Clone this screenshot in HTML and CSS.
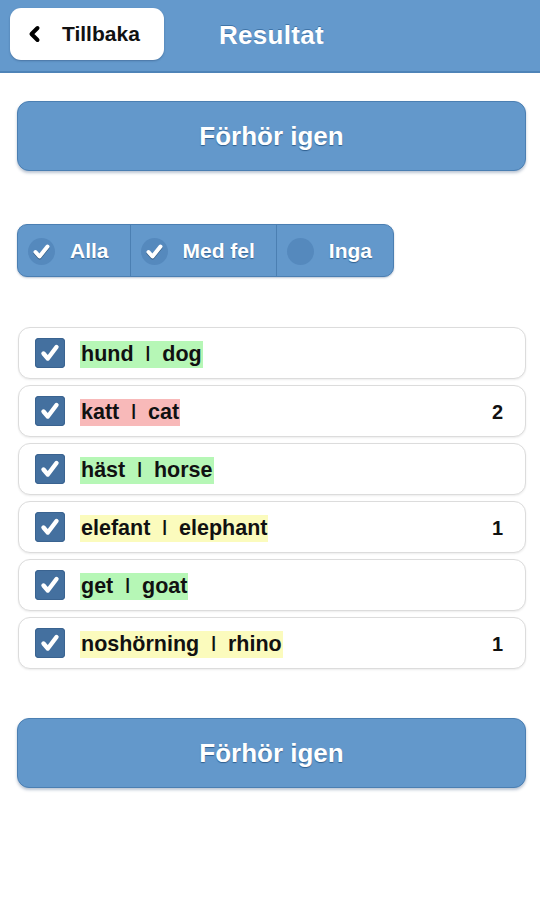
FILE: index.html
```html
<!DOCTYPE html>
<html lang="sv">
<head>
<meta charset="utf-8">
<title>Resultat</title>
<link rel="stylesheet" href="styles.css">
</head>
<body>
<header class="header">
  <a class="back">
    <svg class="chev" width="14" height="18" viewBox="0 0 14 18"><path d="M10.5 3 L4.5 9 L10.5 15" fill="none" stroke="#000" stroke-width="4" stroke-linecap="round" stroke-linejoin="round"/></svg>
    <span>Tillbaka</span>
  </a>
  <h1 class="title">Resultat</h1>
</header>
<main class="content">
  <button class="btn">Förhör igen</button>

  <div class="seg">
    <div class="seg-item"><span class="dot on"><svg width="27" height="27" viewBox="0 0 27 27"><path d="M7.5 14 L11.5 18.5 L19.5 8.5" fill="none" stroke="#fff" stroke-width="4" stroke-linecap="round" stroke-linejoin="round"/></svg></span><span>Alla</span></div>
    <div class="seg-item"><span class="dot on"><svg width="27" height="27" viewBox="0 0 27 27"><path d="M7.5 14 L11.5 18.5 L19.5 8.5" fill="none" stroke="#fff" stroke-width="4" stroke-linecap="round" stroke-linejoin="round"/></svg></span><span>Med fel</span></div>
    <div class="seg-item last"><span class="dot"></span><span>Inga</span></div>
  </div>

  <ul class="list">
    <li class="row"><span class="cb"><svg width="30" height="30" viewBox="0 0 30 30"><path d="M8.5 15.5 L12.8 20.5 L21.5 9" fill="none" stroke="#fff" stroke-width="4.4" stroke-linecap="round" stroke-linejoin="round"/></svg></span><span class="word green">hund<span class="sep">|</span>dog</span><span class="num"></span></li>
    <li class="row"><span class="cb"><svg width="30" height="30" viewBox="0 0 30 30"><path d="M8.5 15.5 L12.8 20.5 L21.5 9" fill="none" stroke="#fff" stroke-width="4.4" stroke-linecap="round" stroke-linejoin="round"/></svg></span><span class="word red">katt<span class="sep">|</span>cat</span><span class="num">2</span></li>
    <li class="row"><span class="cb"><svg width="30" height="30" viewBox="0 0 30 30"><path d="M8.5 15.5 L12.8 20.5 L21.5 9" fill="none" stroke="#fff" stroke-width="4.4" stroke-linecap="round" stroke-linejoin="round"/></svg></span><span class="word green">häst<span class="sep">|</span>horse</span><span class="num"></span></li>
    <li class="row"><span class="cb"><svg width="30" height="30" viewBox="0 0 30 30"><path d="M8.5 15.5 L12.8 20.5 L21.5 9" fill="none" stroke="#fff" stroke-width="4.4" stroke-linecap="round" stroke-linejoin="round"/></svg></span><span class="word yellow">elefant<span class="sep">|</span>elephant</span><span class="num">1</span></li>
    <li class="row"><span class="cb"><svg width="30" height="30" viewBox="0 0 30 30"><path d="M8.5 15.5 L12.8 20.5 L21.5 9" fill="none" stroke="#fff" stroke-width="4.4" stroke-linecap="round" stroke-linejoin="round"/></svg></span><span class="word green">get<span class="sep">|</span>goat</span><span class="num"></span></li>
    <li class="row"><span class="cb"><svg width="30" height="30" viewBox="0 0 30 30"><path d="M8.5 15.5 L12.8 20.5 L21.5 9" fill="none" stroke="#fff" stroke-width="4.4" stroke-linecap="round" stroke-linejoin="round"/></svg></span><span class="word yellow">noshörning<span class="sep">|</span>rhino</span><span class="num">1</span></li>
  </ul>

  <button class="btn">Förhör igen</button>
</main>
</body>
</html>
```
FILE: styles.css
```css
* { box-sizing: border-box; }
html, body { margin: 0; padding: 0; background: #fff; }
body {
  font-family: "Liberation Sans", Arial, Helvetica, sans-serif;
  font-weight: bold;
  color: #111;
  width: 540px;
  height: 900px;
  overflow: hidden;
}
.header {
  height: 73px;
  background: #6499cc;
  border-bottom: 2px solid #4f84b8;
  display: flex;
  align-items: flex-start;
  padding: 8px 0 0 10px;
}
.back {
  width: 154px;
  height: 52px;
  background: #fff;
  border-radius: 11px;
  display: flex;
  align-items: center;
  padding-left: 17px;
  gap: 21px;
  font-size: 21px;
  color: #111;
  box-shadow: 0 1px 2px rgba(40,70,110,0.45);
}
.chev { flex: none; }
.title {
  margin: 0 0 0 55px;
  height: 52px;
  line-height: 54px;
  font-size: 26px;
  color: #fff;
  letter-spacing: 0.3px;
  text-shadow: 0 -1px 0 #3f74a8;
}
.content {
  padding: 28px 14px 0 17px;
  display: flex;
  flex-direction: column;
  align-items: flex-start;
}
.btn {
  width: 509px;
  height: 70px;
  background: #6398cb;
  border: 1px solid #4b7fb2;
  border-radius: 12px;
  color: #fff;
  font-family: inherit;
  font-weight: bold;
  font-size: 26px;
  text-shadow: 0 1px 1px #2f5f8f;
  box-shadow: 0 2px 3px rgba(60,90,130,0.35);
  padding: 0;
}
.seg {
  margin-top: 53px;
  display: flex;
  height: 53px;
  background: #6398cb;
  border: 1px solid #4b7fb2;
  border-radius: 10px;
  box-shadow: 0 1px 2px rgba(60,90,130,0.35);
  overflow: hidden;
}
.seg-item {
  display: flex;
  align-items: center;
  padding: 1px 21px 0 10px;
  gap: 15px;
  font-size: 21px;
  color: #fff;
  text-shadow: 0 1px 1px #2f5f8f;
  border-right: 1px solid #4b7fb2;
}
.seg-item.last { border-right: none; padding-right: 21px; }
.dot {
  width: 27px;
  height: 27px;
  border-radius: 50%;
  background: #5589bd;
  display: flex;
  align-items: center;
  justify-content: center;
  flex: none;
}
.dot.on svg { filter: drop-shadow(0 1px 0 rgba(30,60,90,0.6)); }
.list {
  list-style: none;
  margin: 50px 0 0 1px;
  padding: 0;
  width: 508px;
  display: flex;
  flex-direction: column;
  gap: 6px;
}
.row {
  height: 52px;
  border: 1px solid #dcdcdc;
  border-radius: 12px;
  background: #fff;
  box-shadow: 0 1px 2px rgba(0,0,0,0.08);
  display: flex;
  align-items: center;
  padding: 0 22px 0 16px;
}
.cb {
  width: 30px;
  height: 30px;
  border-radius: 4px;
  background: #44709f;
  display: flex;
  align-items: center;
  justify-content: center;
  flex: none;
  box-shadow: inset 0 0 0 1px #3a6390;
}
.word {
  margin: 2px 0 0 15px;
  font-size: 21.5px;
  line-height: 27px;
  height: 27px;
  padding: 0 1px;
  color: #111;
}
.green { background: #b6f7b6; }
.red { background: #f8b9b9; }
.yellow { background: #fbfbbd; }
.sep {
  margin: 0 12px;
  font-size: 17px;
  position: relative;
  top: -3px;
}
.num {
  margin: 2px 0 0 auto;
  font-size: 20px;
  color: #111;
}
.list + .btn { margin-top: 49px; }
```
